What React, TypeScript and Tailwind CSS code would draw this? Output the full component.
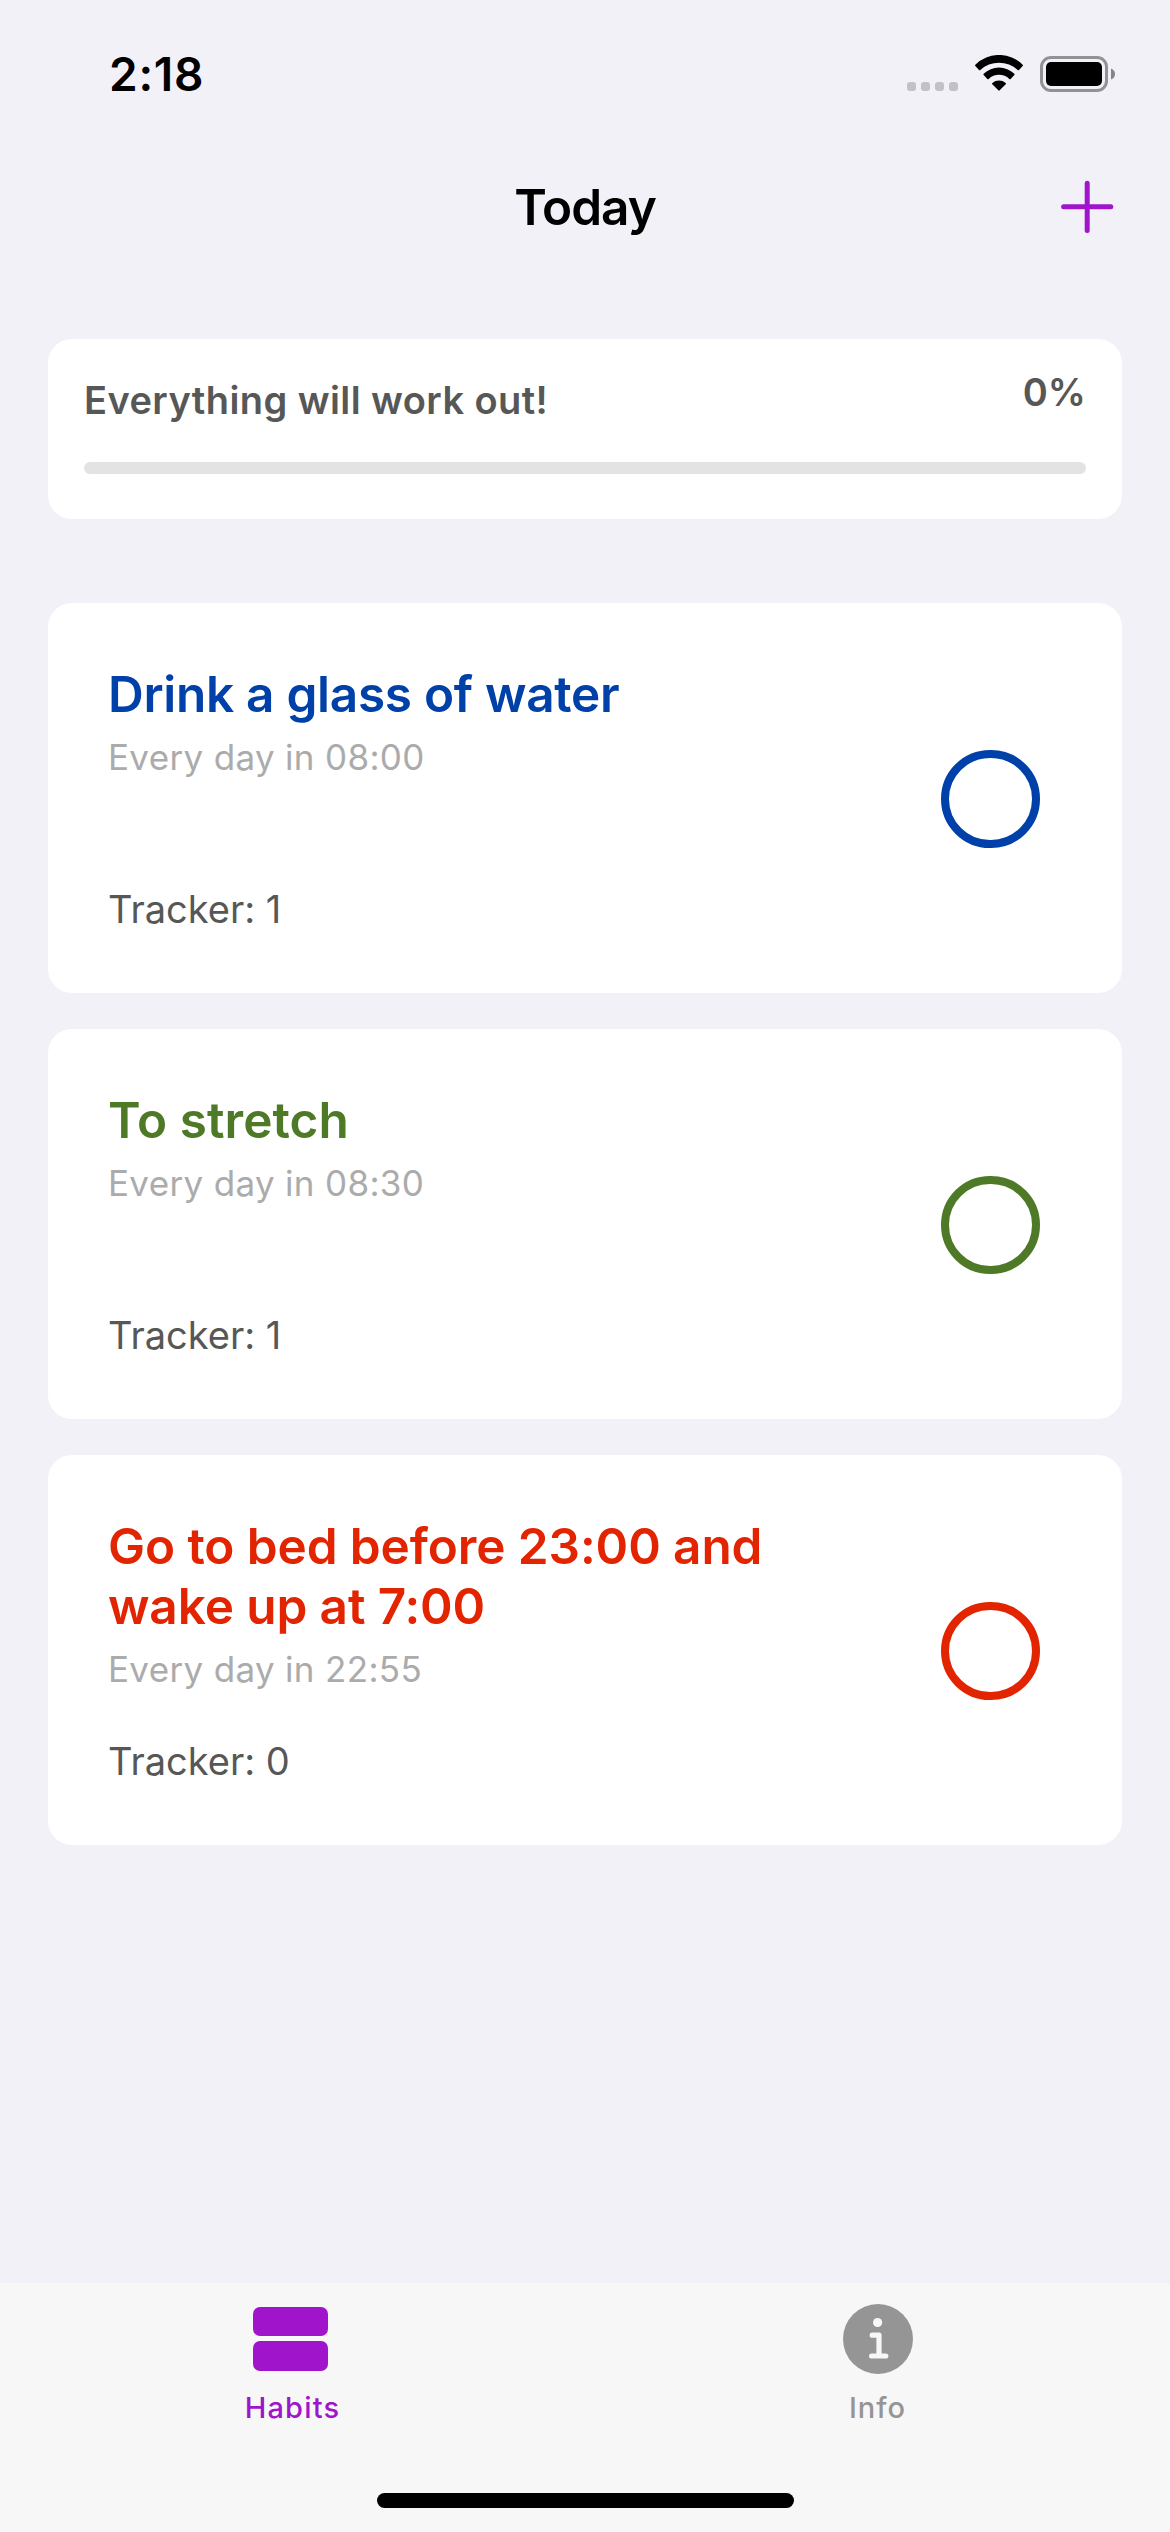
type Habit = {
  title: string;
  tracking: string;
  schedule: string;
  count: number;
  text: string;
  ring: string;
};

const habits: Habit[] = [
  {
    title: "Drink a glass of water",
    tracking: "tracking-[-0.28px]",
    schedule: "Every day in 08:00",
    count: 1,
    text: "text-[#0040a9]",
    ring: "border-[#0040a9]",
  },
  {
    title: "To stretch",
    tracking: "tracking-[0.08px]",
    schedule: "Every day in 08:30",
    count: 1,
    text: "text-[#4e7a27]",
    ring: "border-[#4e7a27]",
  },
  {
    title: "Go to bed before 23:00 and wake up at 7:00",
    tracking: "tracking-[-0.1px]",
    schedule: "Every day in 22:55",
    count: 0,
    text: "text-[#e22400]",
    ring: "border-[#e22400]",
  },
];

function StatusBar() {
  return (
    <div className="flex h-[132px] shrink-0 items-start justify-between pl-[109px] pr-[55px]">
      <span className="mt-[46px] text-[46px] leading-[56px] font-semibold tracking-[0.74px] text-black">2:18</span>
      <div className="mt-[55px] flex h-[37px] items-start">
        <div className="mt-[27px] flex gap-[5px]">
          <i className="size-[9px] rounded-[3px] bg-[#c2c1c6]" />
          <i className="size-[9px] rounded-[3px] bg-[#c2c1c6]" />
          <i className="size-[9px] rounded-[3px] bg-[#c2c1c6]" />
          <i className="size-[9px] rounded-[3px] bg-[#c2c1c6]" />
        </div>
        <svg className="ml-[17px] h-[36px] w-[48px]" viewBox="0 0 144 108">
          <path
            d="M1 29a101 101 0 0 1 142 0q2 2 0 4l-11 12q-2 2-4 0a82 82 0 0 0-112 0q-2 2-4 0L1 33q-2-2 0-4Z"
            fill="#000"
          />
          <path
            d="M26 56a67 67 0 0 1 92 0q2 2 0 4l-11 12q-2 2-4 0a45 45 0 0 0-62 0q-2 2-4 0L26 60q-2-2 0-4Z"
            fill="#000"
          />
          <path d="M52 84a31 31 0 0 1 40 0q2 2 0 4l-18 18q-2 2-4 0L52 88q-2-2 0-4Z" fill="#000" />
        </svg>
        <div className="mt-px ml-[17px] h-[36px] w-[68px] rounded-[11px] border-[3px] border-[#929196] p-[3px]">
          <div className="h-full w-full rounded-[5px] bg-black" />
        </div>
        <svg className="mt-[13px] ml-[3px] h-[12px] w-[4px]" viewBox="0 0 4 12">
          <path d="M0 0.5Q4 2 4 6T0 11.5Z" fill="#848388" />
        </svg>
      </div>
    </div>
  );
}

function NavBar() {
  return (
    <header className="flex h-[207px] shrink-0 items-start justify-between px-[56px] pt-[45px]">
      <div className="h-[60px] w-[54px]" />
      <h1 className="text-[49.5px] leading-[60px] font-semibold tracking-[-0.98px] text-black">Today</h1>
      <button className="flex h-[60px] w-[54px] items-center" aria-label="Add habit">
        <svg width="54" height="54" viewBox="0 0 54 54" stroke="#a015cc" strokeWidth="5" strokeLinecap="round">
          <path d="M27.2 3.2v47.2M3.6 26.8h47.2" />
        </svg>
      </button>
    </header>
  );
}

function ProgressCard() {
  return (
    <section className="h-[180px] rounded-[24px] bg-white px-[36px] pt-[30px] font-semibold text-[#575757]">
      <div className="flex items-start justify-between text-[38px] leading-[46px]">
        <p className="mt-[8px] tracking-[0.42px]">Everything will work out!</p>
        <p>0%</p>
      </div>
      <div className="mt-[39px] h-[12px] rounded-full bg-[#e3e3e3]" />
    </section>
  );
}

function HabitCard({ habit }: { habit: Habit }) {
  return (
    <li className="flex h-[390px] items-center justify-between rounded-[24px] bg-white py-[61px] pr-[82px] pl-[60px]">
      <div className="flex h-full w-[680px] flex-col">
        <h2 className={`text-[49.5px] leading-[60px] font-semibold ${habit.tracking} ${habit.text}`}>{habit.title}</h2>
        <p className="mt-[12px] text-[35px] leading-[43px] tracking-[0.33px] text-[#ababab]">{habit.schedule}</p>
        <p className="mt-auto text-[38px] leading-[46px] text-[#575757]">Tracker: {habit.count}</p>
      </div>
      <div className={`mt-[2px] h-[98px] w-[99px] rounded-full border-[8px] ${habit.ring}`} />
    </li>
  );
}

function TabBar() {
  return (
    <nav className="flex h-[249px] shrink-0 flex-col items-center bg-[#f7f7f7]">
      <div className="flex h-[210px] w-full text-[29px] leading-[36px] font-medium">
        <div className="flex flex-1 flex-col items-center text-[#a015cc]">
          <div className="mt-[23.5px] mr-[4px] flex h-[64.5px] w-[75px] flex-col gap-[5px]">
            <i className="flex-1 rounded-[7px] bg-[#a015cc]" />
            <i className="flex-1 rounded-[7px] bg-[#a015cc]" />
          </div>
          <span className="mt-[19px] tracking-[1.2px]">Habits</span>
        </div>
        <div className="flex flex-1 flex-col items-center text-[#959595]">
          <svg className="mt-[21px] h-[70px] w-[70px]" viewBox="0 0 70 70">
            <circle cx="35" cy="35" r="35" fill="#959595" />
            <circle cx="34.6" cy="18.5" r="4.6" fill="#f7f7f7" />
            <path
              d="M29.2 31.2h6.8v20.8M28.6 52h14.2"
              fill="none"
              stroke="#f7f7f7"
              strokeWidth="5.2"
              strokeLinecap="round"
              strokeLinejoin="round"
            />
          </svg>
          <span className="mt-[16px] tracking-[1px]">Info</span>
        </div>
      </div>
      <div className="h-[15px] w-[417px] rounded-full bg-black" />
    </nav>
  );
}

export default function App() {
  return (
    <div className="flex h-[2532px] w-[1170px] flex-col overflow-hidden bg-[#f2f1f8] font-['Inter',sans-serif]">
      <StatusBar />
      <NavBar />
      <main className="flex flex-1 flex-col px-[48px]">
        <ProgressCard />
        <ul className="mt-[84px] flex flex-col gap-[36px]">
          {habits.map((habit) => (
            <HabitCard key={habit.title} habit={habit} />
          ))}
        </ul>
      </main>
      <TabBar />
    </div>
  );
}
